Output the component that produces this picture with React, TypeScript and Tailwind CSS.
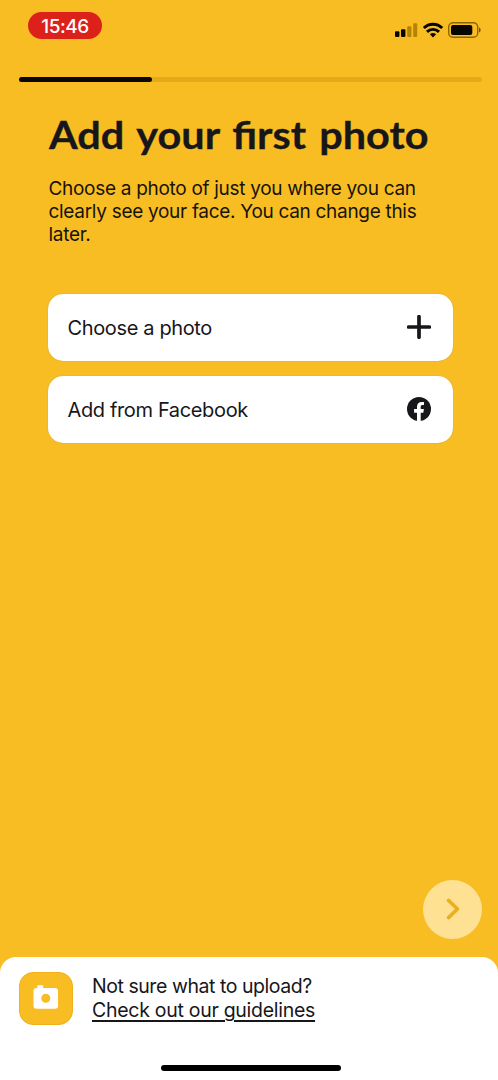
import React from "react";

function StatusIcons() {
  return (
    <svg width="88" height="20" viewBox="0 0 88 20" aria-hidden="true">
      <rect x="1" y="11.3" width="4.4" height="5.7" rx="1" fill="#080600" />
      <rect x="7" y="9.2" width="4.4" height="7.8" rx="1" fill="#080600" />
      <rect x="13.2" y="6.2" width="4.2" height="10.8" rx="1" fill="#b58300" />
      <rect x="19.2" y="3.2" width="4" height="13.8" rx="1" fill="#b58300" />
      <g fill="none" stroke="#080600" strokeWidth="2.9">
        <path d="M29.8 8.1a13 13 0 0 1 18.4 0" />
        <path d="M33 11.9a8.5 8.5 0 0 1 12 0" />
      </g>
      <path d="M39 17.5l-3.1-3.2a4.7 4.7 0 0 1 6.2 0z" fill="#080600" />
      <rect x="54.7" y="2.7" width="29" height="14.6" rx="4.3" fill="none" stroke="#8b6502" strokeWidth="1.4" />
      <rect x="57" y="5" width="21.3" height="10" rx="2" fill="#080600" />
      <path d="M85 7.5c2.2.8 2.2 4.2 0 5z" fill="#785500" />
    </svg>
  );
}

function FacebookIcon() {
  return (
    <svg width="24" height="24" viewBox="0 0 24 24" aria-hidden="true">
      <circle cx="12" cy="12" r="12" fill="#17161b" />
      <path
        d="M10 24v-8.3H7.1v-3.6H10V9.7c0-3.2 1.8-4.8 4.6-4.8 1 0 1.9.1 2.4.2v3h-1.5c-1.4 0-1.8.7-1.8 1.8v2.2h3.2l-.6 3.6h-2.6V24z"
        fill="#fff"
      />
    </svg>
  );
}

function PlusIcon() {
  return (
    <svg width="24" height="24" viewBox="0 0 24 24" aria-hidden="true">
      <path d="M12 1.7v20.6M1.7 12h20.6" stroke="#17161b" strokeWidth="3.7" strokeLinecap="round" />
    </svg>
  );
}

function CameraIcon() {
  return (
    <svg width="26" height="26" viewBox="0 0 26 26" aria-hidden="true">
      <rect x="4.2" y="0.3" width="6" height="2.6" rx="1" fill="#fff" />
      <rect x="0.5" y="3" width="24.5" height="20.8" rx="3" fill="#fff" />
      <circle cx="12.8" cy="13.2" r="4.5" fill="#f8bd22" />
    </svg>
  );
}

function Option({ label, icon }: { label: string; icon: React.ReactNode }) {
  return (
    <button className="flex h-[67.5px] w-full items-center justify-between rounded-[15px] bg-white pl-[19.5px] pr-[22px] text-[20px] tracking-[-0.36px] text-[#17161b] shadow-[0_0_1px_#bd8b18]">
      <span className="whitespace-nowrap pt-px">{label}</span>
      {icon}
    </button>
  );
}

export default function App() {
  return (
    <div className="flex h-[1080px] w-[498px] flex-col overflow-hidden bg-[#f8bd22] font-['Inter','Liberation_Sans',sans-serif] text-[#17130a]">
      <header className="flex h-[77px] shrink-0 items-start justify-between pl-7 pr-[12px] pt-3">
        <div className="flex h-[27px] w-[74px] items-center justify-center rounded-full bg-[#dc211b] pt-[3px] text-[19px] font-medium leading-[24px] tracking-[-0.5px] text-white">
          15:46
        </div>
        <div className="pr-1 pt-2">
          <StatusIcons />
        </div>
      </header>
      <div className="ml-[19px] h-[5px] w-[463px] shrink-0 rounded-full bg-[#e6aa18]">
        <div className="h-full w-[133px] rounded-full bg-[#090804]" />
      </div>
      <main className="flex flex-1 flex-col pl-12 pr-[45px] pt-[28px]">
        <h1 className="ml-px origin-left scale-x-[1.09] whitespace-nowrap font-['Lato',sans-serif] text-[38px] font-bold leading-[48px] text-[#17161b] [-webkit-text-stroke:0.3px_#17161b] [word-spacing:2.7px]">
          Add your first photo
        </h1>
        <p className="ml-[0.5px] mt-[19px] whitespace-nowrap text-[19px] leading-[23px] tracking-[-0.3px]">
          Choose a photo of just you where you can
          <br />
          clearly see your face. You can change this
          <br />
          later.
        </p>
        <div className="mt-[47.5px] flex flex-col gap-[14.5px]">
          <Option label="Choose a photo" icon={<PlusIcon />} />
          <Option label="Add from Facebook" icon={<FacebookIcon />} />
        </div>
      </main>
      <div className="flex shrink-0 justify-end pb-[18px] pr-4">
        <button aria-label="Continue" className="flex size-[59px] items-center justify-center rounded-full bg-[#ffe194] pb-[2px]">
          <svg width="14" height="22" viewBox="0 0 14 22" aria-hidden="true">
            <path d="M2.5 2.4l9 8.6-9 8.6" fill="none" stroke="#eaae20" strokeWidth="3.6" strokeLinecap="round" strokeLinejoin="round" />
          </svg>
        </button>
      </div>
      <footer className="flex h-[123px] shrink-0 flex-col justify-between rounded-t-[16px] bg-white pb-[9.5px] pl-[19px] pt-[14px]">
        <div className="flex items-start">
          <div className="mt-[0.5px] flex h-[53px] w-[54px] items-center justify-center rounded-[14px] border border-[#efb11c] bg-[#f8bd22]">
            <CameraIcon />
          </div>
          <div className="ml-[19px] whitespace-nowrap pt-[3px] text-[19.5px] leading-[24px] text-[#17161b]">
            <p className="tracking-[-0.45px]">Not sure what to upload?</p>
            <a className="tracking-[-0.28px] underline decoration-[1.7px] underline-offset-[3px]">Check out our guidelines</a>
          </div>
        </div>
        <div className="ml-[142px] h-[6px] w-[180px] rounded-full bg-black" />
      </footer>
    </div>
  );
}
